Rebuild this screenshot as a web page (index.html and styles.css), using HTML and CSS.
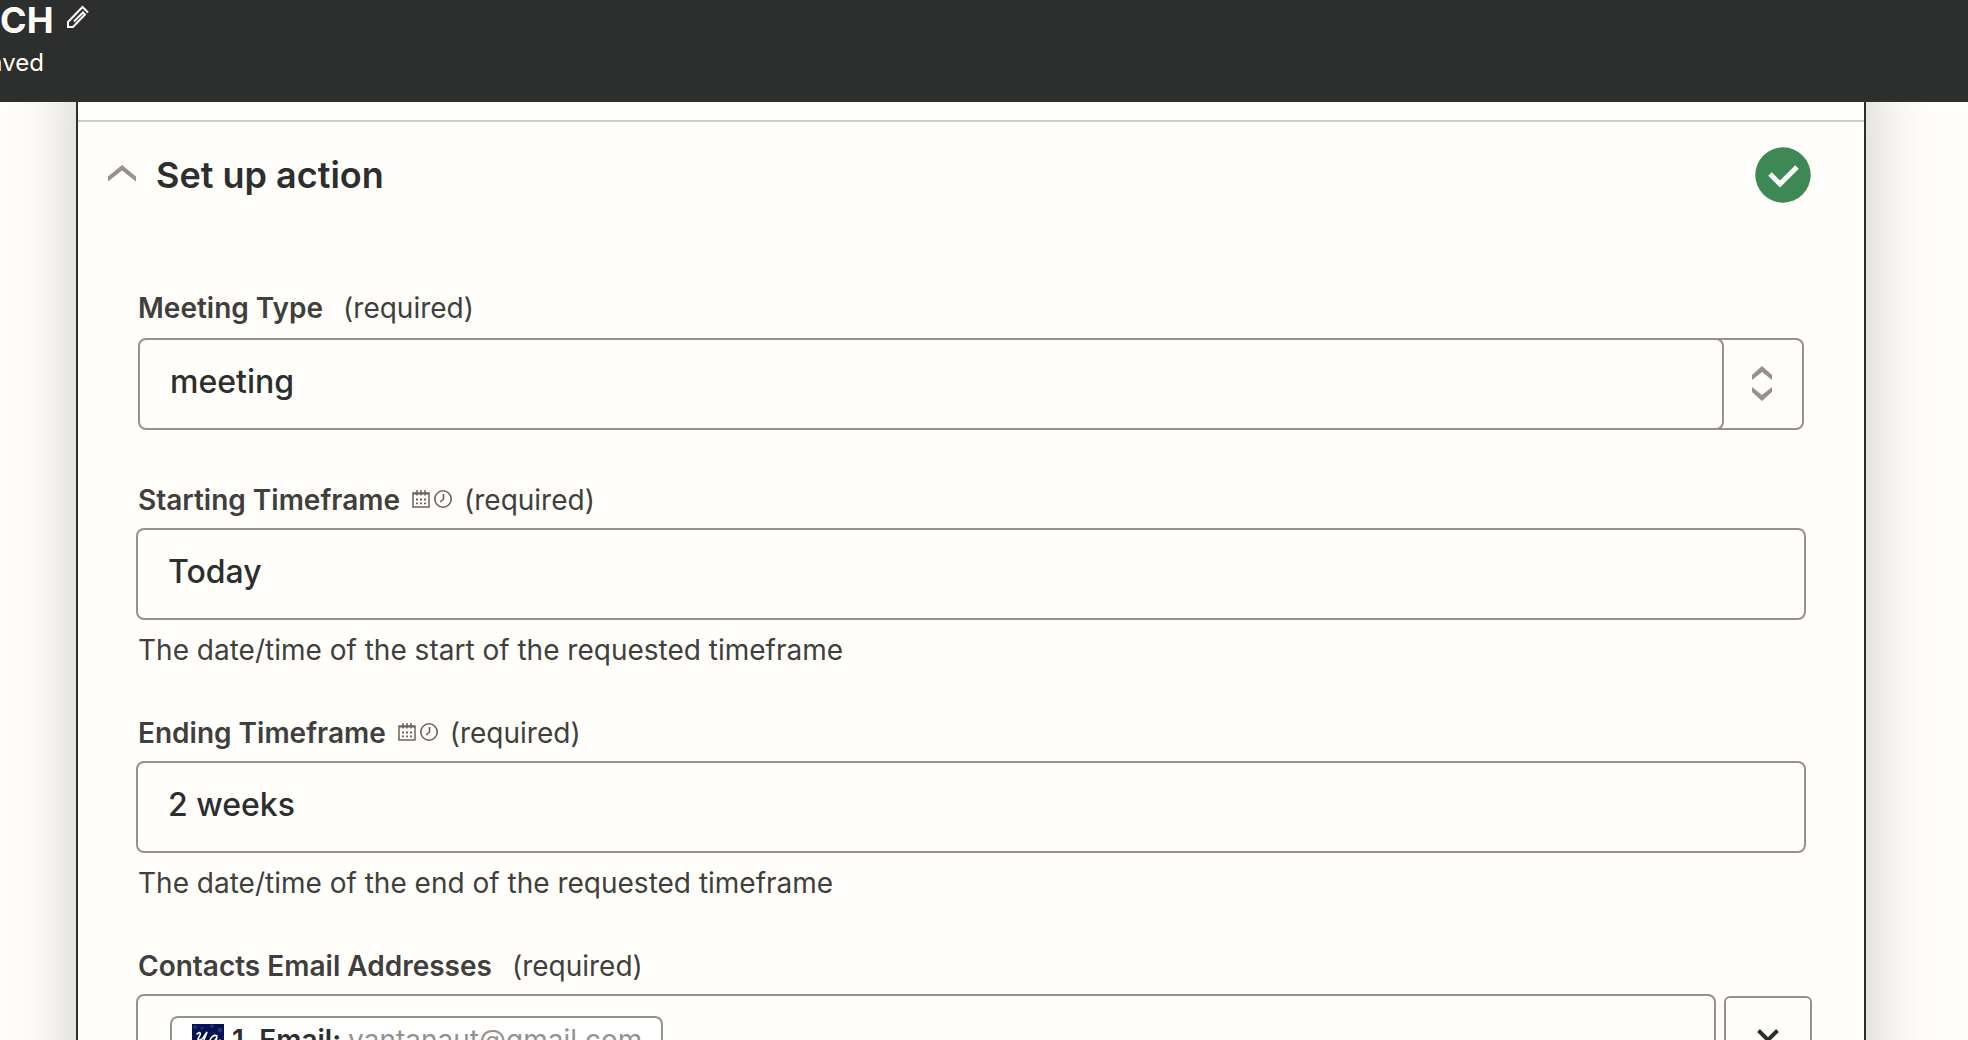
FILE: index.html
```html
<!DOCTYPE html>
<html lang="en">
<head>
<meta charset="utf-8">
<meta name="viewport" content="width=device-width, initial-scale=1">
<title>Set up action</title>
<link rel="stylesheet" href="styles.css">
</head>
<body>
<svg class="sprite" aria-hidden="true">
  <symbol id="calendar" viewBox="0 0 18 18">
    <path d="M1 3h16v14H1zM1 3.700h16M5 0v5.500M9 0v5.500M13 0v5.500" fill="none" stroke="currentColor" stroke-width="1.500"/>
    <path d="M4 9.500h2M8 9.500h2M12 9.500h2M4 13.300h2M8 13.300h2M12 13.300h2" stroke="currentColor" stroke-width="1.800"/>
  </symbol>
  <symbol id="clock" viewBox="0 0 18 18">
    <circle cx="9" cy="9" r="8.200" fill="none" stroke="currentColor" stroke-width="1.600"/>
    <path d="M9.500 4v5L6.200 12" fill="none" stroke="currentColor" stroke-width="1.600"/>
  </symbol>
</svg>
<div class="app">
  <header class="topbar">
    <div class="topbar-title">
      <h1>CH</h1>
      <button class="plain" type="button" aria-label="Rename">
        <svg width="24" height="24" viewBox="0 0 24 24"><path d="M22 7.500L16.500 2 2 17v5h5L19 9.500l-2-2L8 16.500" fill="none" stroke="currentColor" stroke-width="2"/></svg>
      </button>
    </div>
    <p class="topbar-status">aved</p>
  </header>
  <main class="canvas">
    <section class="panel">
      <div class="section-head">
        <button class="plain toggle" type="button" aria-label="Collapse">
          <svg width="28" height="17" viewBox="0 0 28 17"><path d="M0 11.500L14 0l14 11.500v5L14 5.500 0 16.500z" fill="currentColor"/></svg>
        </button>
        <h2>Set up action</h2>
        <svg class="status" width="56" height="56" viewBox="0 0 56 56" role="img" aria-label="Complete"><circle cx="28" cy="28" r="27.700" fill="#3d8854"/><path d="M15 27L25 37 42 20" fill="none" stroke="#fffefa" stroke-width="5"/></svg>
      </div>
      <form class="form">
        <div class="field">
          <label class="label" for="type"><b>Meeting Type</b><span class="req">(required)</span></label>
          <div class="combo">
            <input class="box" id="type" type="text" value="meeting">
            <button class="combo-button" type="button" aria-label="Show options">
              <svg width="20" height="35" viewBox="0 0 20 35"><path d="M0 9L10 0l10 9v5L10 6 0 14zM0 21l10 8 10-8v5l-10 9-10-9z" fill="currentColor"/></svg>
            </button>
          </div>
        </div>
        <div class="field">
          <label class="label" for="start"><b>Starting Timeframe</b><span class="icons"><svg><use href="#calendar"/></svg><svg><use href="#clock"/></svg></span><span>(required)</span></label>
          <input class="box" id="start" type="text" value="Today">
          <p class="help">The date/time of the start of the requested timeframe</p>
        </div>
        <div class="field">
          <label class="label" for="end"><b>Ending Timeframe</b><span class="icons"><svg><use href="#calendar"/></svg><svg><use href="#clock"/></svg></span><span>(required)</span></label>
          <input class="box" id="end" type="text" value="2 weeks">
          <p class="help">The date/time of the end of the requested timeframe</p>
        </div>
        <div class="field">
          <div class="label" id="contacts"><b>Contacts Email Addresses</b><span class="req">(required)</span></div>
          <div class="row">
            <div class="box tokens" role="textbox" tabindex="0" aria-labelledby="contacts">
              <span class="token">
                <svg width="32" height="32" viewBox="0 0 32 32"><path fill="#071350" d="M0 0h32v32H0z"/><g fill="#233073"><circle cx="3" cy="3" r="2"/><circle cx="10" cy="4" r="1.500"/><circle cx="20" cy="2" r="2"/><circle cx="28" cy="6" r="2.500"/><circle cx="4" cy="24" r="2"/><circle cx="25" cy="27" r="2"/></g><path d="M5 10c2-2 4-2 3 1l-2 4c0 2 3 1 5-1l4-6-5 13M25 12c-3-2-7 2-7 5s5 1 7-4l-1 4c0 2 2 1 4-1" fill="none" stroke="#fff" stroke-width="1.600" stroke-linecap="round"/></svg>
                <b>1. Email:</b><span class="token-value">vantanaut@gmail.com</span>
              </span>
            </div>
            <button class="menu-button" type="button" aria-label="Insert data">
              <svg width="24" height="16" viewBox="0 0 24 16"><path d="M2.500 2.500l9.500 9.500 9.500-9.500" fill="none" stroke="currentColor" stroke-width="4"/></svg>
            </button>
          </div>
        </div>
      </form>
    </section>
  </main>
</div>
</body>
</html>
```
FILE: styles.css
```css
* { box-sizing: border-box; }

body {
  margin: 0;
  background: #fffefa;
  color: #2d2e2e;
  font-family: Inter, "Liberation Sans", sans-serif;
}

h1, h2, p { margin: 0; }
button, input { font: inherit; color: inherit; }
b { font-weight: 600; }
svg { display: block; flex: none; }

.sprite { position: absolute; width: 0; height: 0; }
.plain { display: block; border: 0; padding: 0; background: none; }

.app {
  display: flex;
  flex-direction: column;
  height: 100vh;
  overflow: hidden;
}

.topbar {
  flex: none;
  height: 102px;
  background: #2d2e2e;
  color: #fffefa;
}
.topbar-title { display: flex; align-items: flex-start; gap: 12px; height: 40px; }
.topbar-title svg { margin-top: 5px; }
h1 { font-size: 36px; line-height: 40px; font-weight: 700; }
.topbar-status {
  margin: 7px 0 0 -11px;
  font-size: 24px;
  line-height: 32px;
}

.canvas {
  flex: 1;
  min-height: 0;
  padding: 0 102px 0 76px;
  overflow: hidden;
}
.panel {
  min-height: 110vh;
  margin-top: -40px;
  padding-top: 56px;
  border: 2px solid #2d2e2e;
  box-shadow: 0 0 64px rgba(45, 46, 46, 0.26);
}

.section-head {
  display: flex;
  align-items: center;
  height: 108px;
  padding: 0 53px 0 30px;
  border-top: 2px solid #cacaca;
}
.toggle { padding-bottom: 4px; color: #95928e; }
h2 { margin-left: 20px; font-size: 36px; line-height: 44px; font-weight: 600; }
.status { margin-left: auto; }

.form {
  display: flex;
  flex-direction: column;
  gap: 43px;
  padding: 60px 58px 44px;
}
.label {
  display: flex;
  align-items: center;
  margin: 0 2px 8px;
  color: #403f3e;
  font-size: 28px;
  line-height: 40px;
}
.req { margin-left: 20px; }
.icons { display: flex; gap: 4px; margin: 0 12px; padding-bottom: 2px; color: #666462; }
.icons svg { width: 18px; height: 18px; }

.box {
  display: block;
  width: 100%;
  height: 92px;
  padding: 0 30px 5px;
  border: 2px solid #95928e;
  border-radius: 8px;
  background: #fffefa;
  font-size: 32px;
  font-weight: 500;
}
.help {
  margin: 10px 2px 0;
  color: #403f3e;
  font-size: 28px;
  line-height: 40px;
}

.combo { display: flex; margin: 10px 2px 7px; }
.combo .box { position: relative; flex: 1; min-width: 0; }
.combo-button {
  display: grid;
  place-items: center;
  width: 88px;
  margin-left: -8px;
  padding: 0 0 2px 6px;
  border: 2px solid #95928e;
  border-left: 0;
  border-radius: 0 8px 8px 0;
  background: none;
  color: #95928e;
}

.row { display: flex; gap: 8px; margin-right: -6px; }
.tokens { flex: 1; min-width: 0; padding: 20px 32px; }
.token {
  display: inline-flex;
  align-items: center;
  height: 48px;
  padding: 0 19px 0 20px;
  border: 2px solid #95928e;
  border-radius: 8px;
  background: #fff;
  font-size: 28px;
  line-height: 40px;
}
.token b { margin-left: 8px; }
.token-value { margin-left: 7px; color: #95928e; font-weight: 400; }
.menu-button {
  display: grid;
  place-items: center;
  width: 88px;
  height: 88px;
  margin-top: 2px;
  padding: 0 0 8px;
  border: 2px solid #95928e;
  border-radius: 6px;
  background: none;
}
```
